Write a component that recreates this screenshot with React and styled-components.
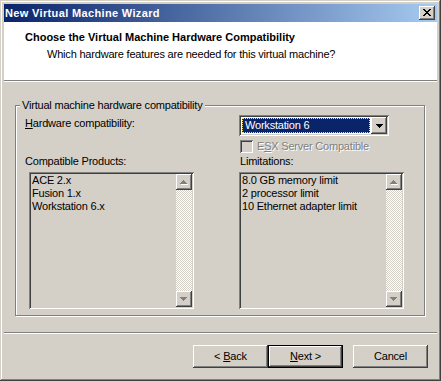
import React from 'react';
import styled, { createGlobalStyle } from 'styled-components';

const Global = createGlobalStyle`
  html, body { margin: 0; padding: 0; background: #D4D0C8; }
  body { font-family: "Liberation Sans", Arial, sans-serif; font-size: 11px; color: #000; letter-spacing: -0.2px; }
  * { box-sizing: border-box; }
`;

const raised = `
  box-shadow: inset -1px -1px 0 #404040, inset 1px 1px 0 #fff,
    inset -2px -2px 0 #808080, inset 2px 2px 0 #D4D0C8;
`;
const sunken = `
  box-shadow: inset 1px 1px 0 #808080, inset -1px -1px 0 #fff,
    inset 2px 2px 0 #404040, inset -2px -2px 0 #D4D0C8;
`;

const Window = styled.div`
  width: 441px;
  height: 381px;
  padding: 4px;
  background: #D4D0C8;
  box-shadow: inset -1px -1px 0 #404040, inset 1px 1px 0 #D4D0C8,
    inset -2px -2px 0 #808080, inset 2px 2px 0 #fff;
  display: flex;
  flex-direction: column;
`;

const TitleBar = styled.div`
  height: 18px;
  display: flex;
  align-items: center;
  padding: 0 2px 0 1px;
  background: linear-gradient(to right, #0A246A, #A6CAF0);
`;

const TitleText = styled.span`
  color: #fff;
  font-weight: bold;
  font-size: 11px;
  line-height: 13px;
  letter-spacing: 0.35px;
`;

const CloseButton = styled.div`
  margin-left: auto;
  width: 16px;
  height: 14px;
  background: #D4D0C8;
  ${raised}
  display: flex;
  align-items: center;
  justify-content: center;
  padding-bottom: 1px;
`;

const Header = styled.div`
  height: 58px;
  background: #fff;
  padding: 9px 0 0 21px;
`;

const HeaderTitle = styled.div`
  font-weight: bold;
  line-height: 13px;
  letter-spacing: 0;
`;

const HeaderSub = styled.div`
  margin-top: 4px;
  padding-left: 22px;
  line-height: 13px;
`;

const Separator = styled.div`
  height: 2px;
  border-top: 1px solid #808080;
  border-bottom: 1px solid #fff;
`;

const Body = styled.div`
  padding: 23px 0 16px 11px;
`;

const Group = styled.div`
  position: relative;
  width: 410px;
  height: 211px;
  border: 1px solid #808080;
  box-shadow: inset 1px 1px 0 #fff, 1px 1px 0 #fff;
  padding: 9px 0 0 9px;
`;

const Legend = styled.span`
  position: absolute;
  top: -7px;
  left: 4px;
  padding: 0 2px;
  line-height: 13px;
  background: #D4D0C8;
`;

const Grid = styled.div`
  display: grid;
  grid-template-columns: 214px 165px;
  grid-template-rows: 25px 15px 17px 137px;
  align-items: start;
`;

const Label = styled.div`
  line-height: 13px;
  margin-top: ${(p) => p.$top || 0}px;
  padding-left: ${(p) => p.$indent || 0}px;
`;

const Combo = styled.div`
  width: 150px;
  height: 21px;
  padding: 2px;
  background: #fff;
  ${sunken}
  display: flex;
`;

const ComboValue = styled.div`
  flex: 1;
  margin: 1px;
  background: #0A246A;
  border: 1px dotted #F3E08A;
  color: #fff;
  line-height: 13px;
  padding-left: 2px;
`;

const ArrowButton = styled.div`
  width: 16px;
  height: ${(p) => p.$h || 16}px;
  background: #D4D0C8;
  ${raised}
  display: flex;
  align-items: center;
  justify-content: center;
  flex-shrink: 0;
`;

const CheckRow = styled.div`
  display: flex;
  align-items: center;
  height: 13px;
  padding-left: 1px;
`;

const CheckBox = styled.div`
  width: 13px;
  height: 13px;
  background: #D4D0C8;
  ${sunken}
`;

const DisabledText = styled.span`
  margin-left: 4px;
  color: #808080;
  text-shadow: 1px 1px 0 #fff;
  line-height: 13px;
`;

const ListBox = styled.div`
  width: 165px;
  height: 137px;
  margin-left: ${(p) => p.$offset || 0}px;
  padding: 2px;
  background: #D4D0C8;
  ${sunken}
  display: flex;
`;

const Items = styled.div`
  flex: 1;
  padding: 0 0 0 1px;
`;

const Item = styled.div`
  line-height: 13px;
  white-space: nowrap;
`;

const ScrollBar = styled.div`
  width: 16px;
  display: flex;
  flex-direction: column;
`;

const Track = styled.div`
  flex: 1;
  background: repeating-conic-gradient(#fff 0 25%, #D4D0C8 0 50%) 0 0 / 2px 2px;
`;

const Footer = styled.div`
  display: flex;
  justify-content: flex-end;
  padding: 11px 9px 9px 0;
`;

const Button = styled.div`
  width: 75px;
  height: 23px;
  margin-left: ${(p) => p.$gap || 0}px;
  display: flex;
  align-items: center;
  justify-content: center;
  background: #D4D0C8;
  line-height: 13px;
  ${(p) =>
    p.$default
      ? `box-shadow: inset 0 0 0 1px #000, inset -2px -2px 0 #404040, inset 2px 2px 0 #fff,
          inset -3px -3px 0 #808080, inset 3px 3px 0 #D4D0C8;`
      : raised}
`;

const GrayArrow = ({ down }) => (
  <svg width="8" height="5" viewBox="0 0 8 5">
    <g transform={down ? 'rotate(180 3.5 2)' : undefined}>
      <path d="M1 4h7v1H1zM2 3h5v1H2zM3 2h3v1H3zM4 1h1v1H4z" fill="#fff" />
      <path d="M0 3h7v1H0zM1 2h5v1H1zM2 1h3v1H2zM3 0h1v1H3z" fill="#808080" />
    </g>
  </svg>
);

const Scroll = () => (
  <ScrollBar>
    <ArrowButton>
      <GrayArrow />
    </ArrowButton>
    <Track />
    <ArrowButton>
      <GrayArrow down />
    </ArrowButton>
  </ScrollBar>
);

export default function App() {
  return (
    <>
      <Global />
      <Window>
        <TitleBar>
          <TitleText>New Virtual Machine Wizard</TitleText>
          <CloseButton>
            <svg width="8" height="7" viewBox="0 0 8 7" shapeRendering="crispEdges">
              <path
                d="M0 0h2v1H0zM6 0h2v1H6zM1 1h2v1H1zM5 1h2v1H5zM2 2h4v1H2zM3 3h2v1H3zM2 4h4v1H2zM1 5h2v1H1zM5 5h2v1H5zM0 6h2v1H0zM6 6h2v1H6z"
                fill="#000"
              />
            </svg>
          </CloseButton>
        </TitleBar>
        <Header>
          <HeaderTitle>Choose the Virtual Machine Hardware Compatibility</HeaderTitle>
          <HeaderSub>Which hardware features are needed for this virtual machine?</HeaderSub>
        </Header>
        <Separator />
        <Body>
          <Group>
            <Legend>Virtual machine hardware compatibility</Legend>
            <Grid>
              <Label $top={2}>
                <u>H</u>ardware compatibility:
              </Label>
              <Combo>
                <ComboValue>Workstation 6</ComboValue>
                <ArrowButton $h={17}>
                  <svg width="7" height="4" viewBox="0 0 7 4" shapeRendering="crispEdges">
                    <path d="M0 0h7v1H0zM1 1h5v1H1zM2 2h3v1H2zM3 3h1v1H3z" fill="#000" />
                  </svg>
                </ArrowButton>
              </Combo>
              <div />
              <CheckRow>
                <CheckBox />
                <DisabledText>
                  E<u>S</u>X Server Compatible
                </DisabledText>
              </CheckRow>
              <Label>Compatible Products:</Label>
              <Label $indent={1}>Limitations:</Label>
              <ListBox $offset={4}>
                <Items>
                  <Item>ACE 2.x</Item>
                  <Item>Fusion 1.x</Item>
                  <Item>Workstation 6.x</Item>
                </Items>
                <Scroll />
              </ListBox>
              <ListBox>
                <Items>
                  <Item>8.0 GB memory limit</Item>
                  <Item>2 processor limit</Item>
                  <Item>10 Ethernet adapter limit</Item>
                </Items>
                <Scroll />
              </ListBox>
            </Grid>
          </Group>
        </Body>
        <Separator />
        <Footer>
          <Button>
            &lt;&nbsp;<u>B</u>ack
          </Button>
          <Button $default>
            <u>N</u>ext &gt;
          </Button>
          <Button $gap={10}>Cancel</Button>
        </Footer>
      </Window>
    </>
  );
}
